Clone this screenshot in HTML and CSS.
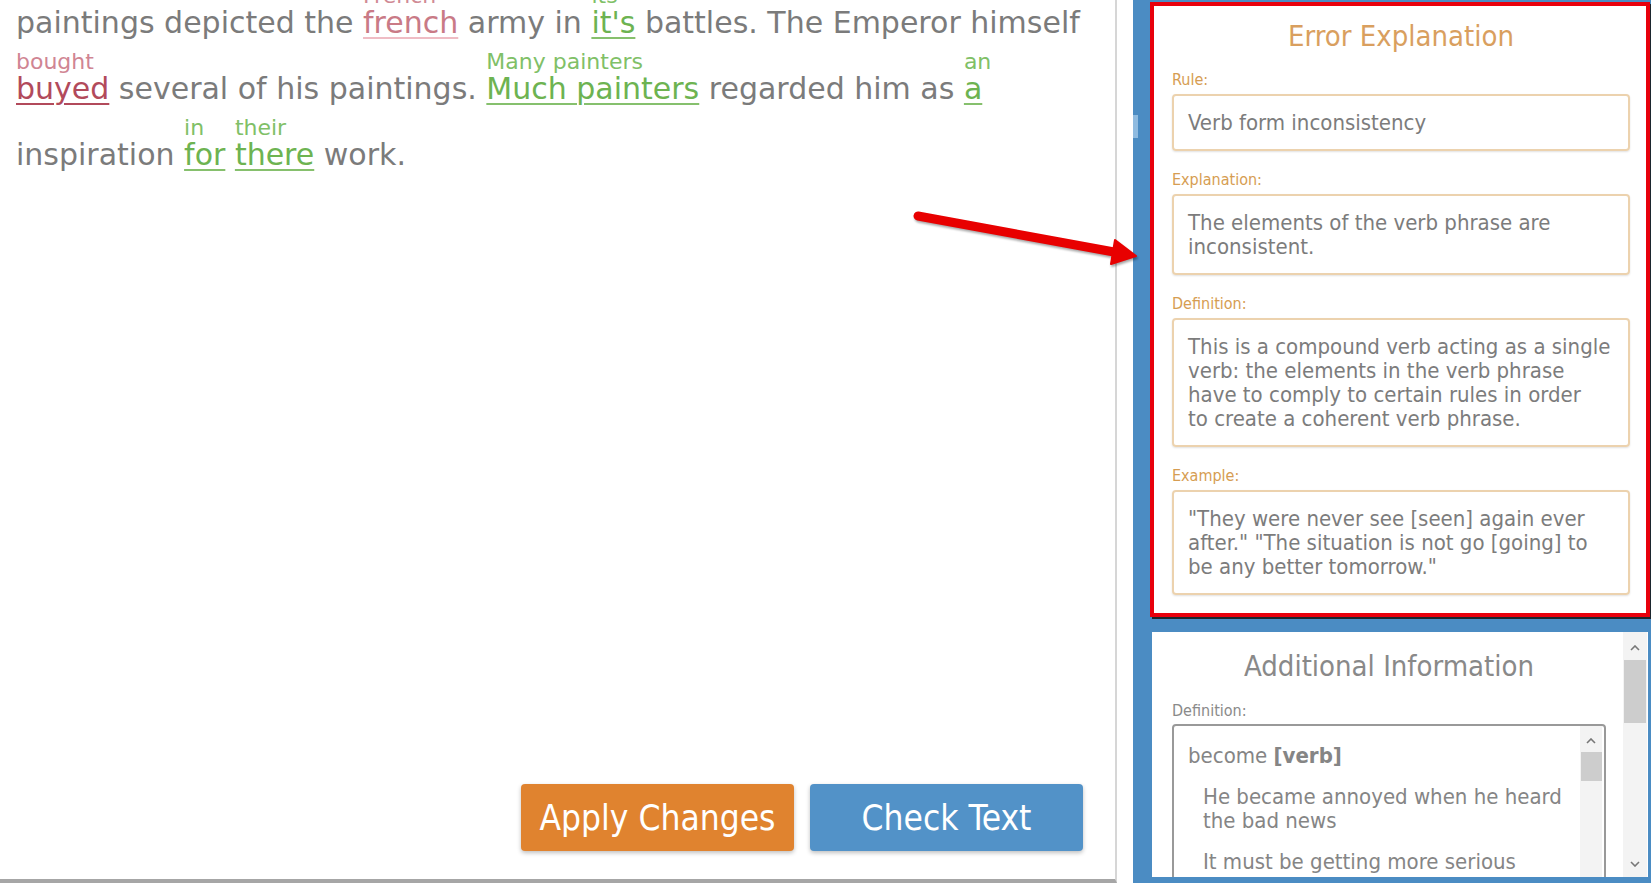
FILE: index.html
```html
<!DOCTYPE html>
<html lang="en">
<head>
<meta charset="utf-8">
<title>Grammar check</title>
<link rel="stylesheet" href="styles.css">
</head>
<body>
<div class="app">
  <section class="editor">
    <div class="doc">
      <p class="text">paintings depicted the <span class="mark err-soft"><span class="sugg">French</span>french</span> army in <span class="mark ok"><span class="sugg">its</span>it's</span> battles. The Emperor himself <span class="mark err"><span class="sugg">bought</span>buyed</span> several of his paintings. <span class="mark ok"><span class="sugg">Many painters</span>Much painters</span> regarded him as <span class="mark ok"><span class="sugg">an</span>a</span> inspiration <span class="mark ok"><span class="sugg">in</span>for</span> <span class="mark ok"><span class="sugg">their</span>there</span> work.</p>
    </div>
    <div class="actions">
      <button class="btn apply">Apply Changes</button>
      <button class="btn check">Check Text</button>
    </div>
  </section>
  <div class="gutter"></div>
  <aside class="side">
    <div class="panel err-panel">
      <h2 class="title">Error Explanation</h2>
      <div class="label">Rule:</div>
      <div class="box">Verb form inconsistency</div>
      <div class="label">Explanation:</div>
      <div class="box">The elements of the verb phrase are inconsistent.</div>
      <div class="label">Definition:</div>
      <div class="box">This is a compound verb acting as a single verb: the elements in the verb phrase have to comply to certain rules in order<br>to create a coherent verb phrase.</div>
      <div class="label">Example:</div>
      <div class="box">"They were never see [seen] again ever after." "The situation is not go [going] to be any better tomorrow."</div>
    </div>
    <div class="panel add-panel">
      <div class="add-body">
        <h2 class="title gray">Additional Information</h2>
        <div class="label gray">Definition:</div>
        <div class="defbox">
          <div class="def-body">
            <div class="word">become <b>[verb]</b></div>
            <p class="ex">He became annoyed when he heard the bad news</p>
            <p class="ex">It must be getting more serious</p>
          </div>
          <div class="vscroll inner">
            <svg class="chev" width="10" height="6" viewBox="0 0 10 6"><polyline points="1,5 5,1 9,5" fill="none" stroke="#777" stroke-width="1.6"/></svg>
            <div class="thumb"></div>
          </div>
        </div>
      </div>
      <div class="vscroll outer">
        <svg class="chev" width="10" height="6" viewBox="0 0 10 6"><polyline points="1,5 5,1 9,5" fill="none" stroke="#777" stroke-width="1.6"/></svg>
        <div class="thumb"></div>
        <div class="fill"></div>
        <svg class="chev down" width="10" height="6" viewBox="0 0 10 6"><polyline points="1,1 5,5 9,1" fill="none" stroke="#777" stroke-width="1.6"/></svg>
      </div>
    </div>
  </aside>
  <svg class="arrow" width="1651" height="883" viewBox="0 0 1651 883">
    <line x1="918" y1="216" x2="1114" y2="252" stroke="#e80000" stroke-width="9" stroke-linecap="round"/>
    <polygon points="1115,240 1136,256 1111,264" fill="#e80000" stroke="#e80000" stroke-width="2" stroke-linejoin="round"/>
  </svg>
</div>
</body>
</html>
```

FILE: styles.css
```css
html, body {
  margin: 0;
  padding: 0;
  background: #fff;
}
body {
  width: 1651px;
  height: 883px;
  overflow: hidden;
  font-family: "DejaVu Sans", "Liberation Sans", sans-serif;
}
.app {
  position: relative;
  display: flex;
  height: 883px;
}

/* ---------- editor ---------- */
.editor {
  width: 1117px;
  height: 883px;
  box-sizing: border-box;
  border-right: 2px solid #d6d6d6;
  border-bottom: 4px solid #a6a6a6;
  display: flex;
  flex-direction: column;
  background: #fff;
}
.doc {
  flex: 1;
  overflow: hidden;
  padding: 0 10px 0 16px;
}
.text {
  margin: -10px 0 0;
  font-size: 30px;
  line-height: 66px;
  color: #7b7b7b;
}
.mark {
  position: relative;
  text-decoration: underline;
  text-decoration-thickness: 2px;
  text-underline-offset: 4px;
}
.sugg {
  position: absolute;
  left: 0;
  top: -20px;
  font-size: 22px;
  line-height: 22px;
  white-space: nowrap;
  text-decoration: none;
}
.mark.err-soft { color: #c97a86; text-decoration-color: #efbcc4; }
.mark.err-soft .sugg { color: #d08a95; }
.mark.err { color: #b24a5b; text-decoration-color: #b24a5b; }
.mark.err .sugg { color: #d08593; }
.mark.ok { color: #6db351; text-decoration-color: #86c06d; }
.mark.ok .sugg { color: #80c067; }

.actions {
  display: flex;
  justify-content: flex-end;
  align-items: flex-end;
  gap: 16px;
  padding: 0 32px 28px 0;
}
.btn {
  width: 273px;
  height: 67px;
  border: 0;
  border-radius: 4px;
  color: #fff;
  font-family: "DejaVu Sans Condensed", "DejaVu Sans", sans-serif;
  font-size: 35px;
  box-shadow: 0 2px 4px rgba(0, 0, 0, 0.25);
  padding: 0;
}
.btn.apply { background: #e0832f; }
.btn.check { background: #5292c8; }

.gutter {
  width: 16px;
  background: #fff;
}

/* ---------- side ---------- */
.side {
  position: relative;
  flex: 1;
  box-sizing: border-box;
  height: 883px;
  background: #4b8cc3;
  padding: 2px 1px 6px 17px;
  display: flex;
  flex-direction: column;
  gap: 15px;
}
.side::before {
  content: "";
  position: absolute;
  left: 0;
  top: 115px;
  width: 5px;
  height: 23px;
  background: #8fbbe0;
}
.panel {
  background: #fff;
}
.err-panel {
  height: 615px;
  box-sizing: border-box;
  border: 4px solid #e8000c;
  box-shadow: 2px 2px 0 rgba(20, 20, 20, 0.85);
  padding: 14px 16px 0 18px;
}
.title {
  margin: 0;
  text-align: center;
  font-family: "DejaVu Sans Condensed", "DejaVu Sans", sans-serif;
  font-weight: normal;
  font-size: 29px;
  line-height: 33px;
  color: #d99f5f;
}
.title.gray { color: #898989; }
.label {
  margin: 20px 0 5px;
  font-family: "DejaVu Sans Condensed", "DejaVu Sans", sans-serif;
  font-size: 16px;
  line-height: 18px;
  color: #d69d52;
}
.title + .label { margin-top: 18px; }
.label.gray {
  color: #8a8a8a;
  margin: 19px 0 4px;
}
.box {
  border: 2px solid #ecd2ae;
  border-radius: 4px;
  padding: 15px 10px 14px 14px;
  font-family: "DejaVu Sans Condensed", "DejaVu Sans", sans-serif;
  font-size: 22px;
  line-height: 24px;
  color: #7c7c7c;
  box-shadow: 0 1px 2px rgba(0, 0, 0, 0.12);
}

.add-panel {
  flex: 1;
  margin: 0 2px;
  display: flex;
  overflow: hidden;
}
.add-body {
  flex: 1;
  padding: 18px 17px 0 20px;
}
.defbox {
  display: flex;
  height: 200px;
  border: 2px solid #999;
  border-radius: 4px;
  font-family: "DejaVu Sans Condensed", "DejaVu Sans", sans-serif;
  color: #858585;
}
.def-body {
  flex: 1;
  padding: 17px 0 0 14px;
}
.word {
  font-size: 22px;
  line-height: 26px;
}
.ex {
  margin: 16px 0 0 15px;
  font-size: 22px;
  line-height: 24px;
}
.ex + .ex { margin-top: 17px; }

.vscroll {
  display: flex;
  flex-direction: column;
  align-items: center;
  background: #f3f3f3;
}
.vscroll .thumb {
  background: #cdcdcd;
}
.vscroll.outer {
  width: 24px;
  margin-right: 1px;
}
.vscroll.outer .chev { margin-top: 13px; }
.vscroll.outer .thumb {
  width: 22px;
  height: 63px;
  margin-top: 9px;
}
.vscroll.outer .fill { flex: 1; }
.vscroll.outer .chev.down { margin: 0 0 10px; }
.vscroll.inner {
  width: 22px;
  margin-right: 2px;
}
.vscroll.inner .chev { margin-top: 12px; }
.vscroll.inner .thumb {
  width: 21px;
  height: 29px;
  margin-top: 8px;
}

.arrow {
  position: absolute;
  left: 0;
  top: 0;
  pointer-events: none;
  filter: drop-shadow(1px 2px 1px rgba(0, 0, 0, 0.35));
}
```
